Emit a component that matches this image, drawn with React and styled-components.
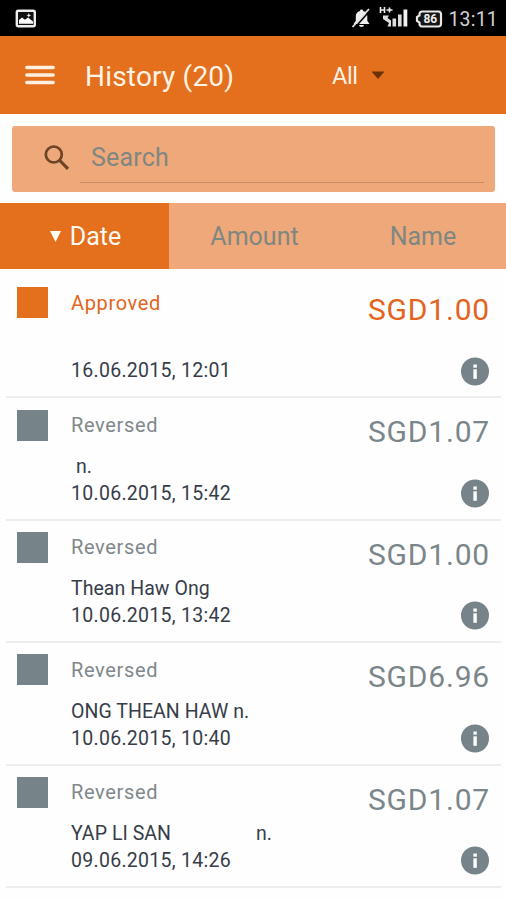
import React from "react";
import styled, { createGlobalStyle } from "styled-components";

const ORANGE = "#e46f1d";
const PEACH = "#eea879";
const GREY = "#76848a";

const GlobalStyle = createGlobalStyle`
    * {
        box-sizing: border-box;
    }

    body {
        margin: 0;
        background-color: #fff;
        font-family: Roboto, sans-serif;
    }

    svg {
        flex-shrink: 0;
    }
`;

const Screen = styled.div`
    width: 506px;
    height: 900px;
    overflow: hidden;
    background-color: #fefefe;
`;

const StatusBar = styled.div`
    display: flex;
    align-items: center;
    justify-content: space-between;
    height: 36px;
    padding: 0 8px 0 15px;
    background-color: #000;
`;

const StatusIcons = styled.div`
    display: flex;
    align-items: center;
`;

const Clock = styled.span`
    margin: 4px 0 0 5px;
    color: #d2d2d2;
    font-size: 19.5px;
    line-height: 24px;
    letter-spacing: 0.2px;
`;

const Header = styled.header`
    display: flex;
    align-items: center;
    height: 78px;
    padding-left: 25px;
    background-color: ${ORANGE};
    color: #fff3e6;
`;

const Title = styled.h1`
    width: 247px;
    margin: 4px 0 0 30px;
    font-size: 28px;
    font-weight: 400;
    line-height: 36px;
    letter-spacing: 0.2px;
`;

const Filter = styled.div`
    display: flex;
    align-items: center;
    gap: 13px;
    padding-top: 1px;
    font-size: 23.5px;
    line-height: 30px;
    letter-spacing: -0.4px;
`;

const SearchBox = styled.div`
    display: flex;
    align-items: flex-start;
    height: 66px;
    margin: 11.5px 11px 11.5px 12px;
    padding: 9px 11px 0 31px;
    border-radius: 3px;
    background-color: ${PEACH};
`;

const SearchField = styled.div`
    flex: 1;
    height: 48px;
    margin-left: 10px;
    padding-left: 11px;
    border-bottom: 1px solid #cb8c63;
    color: #7f8782;
    font-size: 25px;
    line-height: 46px;
    letter-spacing: 0.2px;
`;

const Tabs = styled.div`
    display: grid;
    grid-template-columns: 169px 169px 168px;
    height: 66px;
`;

const Tab = styled.div`
    display: flex;
    align-items: center;
    justify-content: center;
    gap: 9px;
    padding-left: 2px;
    background-color: ${(props) => (props.$active ? ORANGE : PEACH)};
    color: ${(props) => (props.$active ? "#fffaf2" : "#7f8782")};
    font-size: 25px;
`;

const List = styled.div`
    padding: 7px 5px 0 6px;
`;

const Row = styled.div`
    display: grid;
    grid-template-columns: 65px 1fr auto;
    height: 122.4px;
    padding-right: 11px;
    border-bottom: 2px solid #ededee;
`;

const Square = styled.div`
    width: 31px;
    height: 31px;
    margin: 11.2px 0 0 11.4px;
    background-color: ${(props) => props.$color};
`;

const Details = styled.div`
    padding-top: 13.7px;
    color: #363d49;
    font-size: 20px;
    line-height: 26.8px;
`;

const Status = styled.div`
    margin-bottom: 15px;
    color: ${(props) => props.$color};
    letter-spacing: 0.65px;
`;

const Name = styled.div`
    height: 27px;
    font-size: 19.5px;
    letter-spacing: 0.05px;
    white-space: pre;
`;

const Suffix = styled.span`
    margin-left: ${(props) => props.$gap}px;
`;

const DateTime = styled.div`
    font-size: 19.5px;
    letter-spacing: 0.28px;
`;

const Side = styled.div`
    display: flex;
    flex-direction: column;
    align-items: flex-end;
    padding-top: 16px;
`;

const Amount = styled.div`
    height: 36px;
    margin-bottom: 28.7px;
    color: ${(props) => props.$color};
    font-size: 30px;
    line-height: 36px;
    letter-spacing: 0.8px;
`;

const PictureIcon = () => (
    <svg width="22" height="19" viewBox="0 0 22 19">
        <rect x="1.8" y="1.8" width="18" height="15.4" rx="1.5" fill="#111" stroke="#eee" strokeWidth="2.4" />
        <path d="M4 14.8V11l3-2.5 3 2.2 3-2.2 5 4v2.3z" fill="#fff" />
        <path d="M13.8 4l.7 1.7 1.7.7-1.7.7-.7 1.7-.7-1.7-1.7-.7 1.7-.7z" fill="#eee" />
    </svg>
);

const MutedIcon = () => (
    <svg width="20" height="20" viewBox="0 0 20 20" style={{ marginRight: 8 }}>
        <path
            d="M10.5 1.5c1.2 0 1.6.6 1.6 1.5 3 .8 4.2 2.8 4.2 5.3v4.5l2.2 3.2h-16l2.3-3.2V8.3c0-2.5 1.3-4.5 4.2-5.3 0-.9.4-1.5 1.5-1.5z"
            fill="#eee"
        />
        <path d="M8 17h5a2.5 2 0 0 1-5 0z" fill="#eee" />
        <path d="M19 2.500L4 19.5" stroke="#000" strokeWidth="1.6" />
        <path d="M18 1L1.5 19" stroke="#e6e6e6" strokeWidth="1.8" />
    </svg>
);

const SignalIcon = () => (
    <svg width="30" height="22" viewBox="0 0 30 22" style={{ margin: "0 6px 2px 0" }}>
        <path d="M1.5 1v6M5.5 1v6M1.5 4h4M7.5 4h6M10.5 1.5v5" stroke="#eee" strokeWidth="1.6" />
        <path d="M4 9.5h6l-1.5 2.5 3.5 2.5v6H8.5l1.5-3.5L4 13z" fill="#ddd" />
        <rect x="13.5" y="12.5" width="3.6" height="8" fill="#ddd" />
        <rect x="19" y="8.5" width="3.6" height="12" fill="#ddd" />
        <rect x="24.5" y="3.5" width="3.8" height="17" fill="#f2f2f2" />
    </svg>
);

const BatteryIcon = () => (
    <svg width="28" height="18" viewBox="0 0 28 18" style={{ marginTop: 2 }}>
        <path
            d="M7 1.5h16.5A2.5 2.5 0 0 1 26 4v10a2.5 2.5 0 0 1-2.5 2.5H7A2.5 2.5 0 0 1 4.5 14v-1.5L2 11V7l2.5-1.5V4A2.5 2.5 0 0 1 7 1.5z"
            fill="#161616"
            stroke="#e8e8e8"
            strokeWidth="2.2"
        />
        <text x="15.3" y="13.2" textAnchor="middle" fontSize="12" fontWeight="700" fill="#eee">
            86
        </text>
    </svg>
);

const MenuIcon = () => (
    <svg width="30" height="20" viewBox="0 0 30 20">
        <path d="M1.8 2.5h26.4M1.8 10h26.4M1.8 17.5h26.4" stroke="#fff0e2" strokeWidth="3.3" strokeLinecap="round" />
    </svg>
);

const SearchIcon = () => (
    <svg width="27" height="27" viewBox="0 0 27 27" style={{ marginTop: 9 }}>
        <circle cx="10.8" cy="10.5" r="8" fill="none" stroke="#6c4326" strokeWidth="2.7" />
        <path d="M16.3 16l8.7 8.8" stroke="#6c4326" strokeWidth="3.2" />
    </svg>
);

const InfoIcon = () => (
    <svg width="29" height="29" viewBox="0 0 29 29">
        <circle cx="14" cy="14.5" r="14" fill={GREY} />
        <rect x="12.4" y="7.5" width="3.4" height="3.2" fill="#fff" />
        <rect x="12.4" y="12.3" width="3.4" height="9.5" fill="#fff" />
    </svg>
);

const payments = [
    { status: "Approved", amount: "SGD1.00", name: "", date: "16.06.2015, 12:01" },
    { status: "Reversed", amount: "SGD1.07", name: " n.", date: "10.06.2015, 15:42" },
    { status: "Reversed", amount: "SGD1.00", name: "Thean Haw Ong", date: "10.06.2015, 13:42" },
    { status: "Reversed", amount: "SGD6.96", name: "ONG THEAN HAW n.", date: "10.06.2015, 10:40" },
    { status: "Reversed", amount: "SGD1.07", name: "YAP LI SAN", suffix: "n.", date: "09.06.2015, 14:26" },
];

const Payment = ({ item }) => {
    const approved = item.status === "Approved";

    return (
        <Row>
            <Square $color={approved ? ORANGE : GREY} />
            <Details>
                <Status $color={approved ? "#e2651c" : "#7f888b"}>{item.status}</Status>
                <Name>
                    {item.name}
                    {item.suffix && <Suffix $gap={85}>{item.suffix}</Suffix>}
                </Name>
                <DateTime>{item.date}</DateTime>
            </Details>
            <Side>
                <Amount $color={approved ? "#e36420" : "#7b868a"}>{item.amount}</Amount>
                <InfoIcon />
            </Side>
        </Row>
    );
};

const App = () => (
    <>
        <GlobalStyle />
        <Screen>
            <StatusBar>
                <PictureIcon />
                <StatusIcons>
                    <MutedIcon />
                    <SignalIcon />
                    <BatteryIcon />
                    <Clock>13:11</Clock>
                </StatusIcons>
            </StatusBar>
            <Header>
                <MenuIcon />
                <Title>History (20)</Title>
                <Filter>
                    All
                    <svg width="14" height="9" viewBox="0 0 14 9">
                        <path d="M.5.5h13L7 8z" fill="#6b3208" />
                    </svg>
                </Filter>
            </Header>
            <SearchBox>
                <SearchIcon />
                <SearchField>Search</SearchField>
            </SearchBox>
            <Tabs>
                <Tab $active>
                    <svg width="11" height="11" viewBox="0 0 11 11">
                        <path d="M0 0h11L5.5 11z" fill="#fffaf2" />
                    </svg>
                    Date
                </Tab>
                <Tab>Amount</Tab>
                <Tab>Name</Tab>
            </Tabs>
            <List>
                {payments.map((item, i) => (
                    <Payment key={i} item={item} />
                ))}
            </List>
        </Screen>
    </>
);

export default App;
